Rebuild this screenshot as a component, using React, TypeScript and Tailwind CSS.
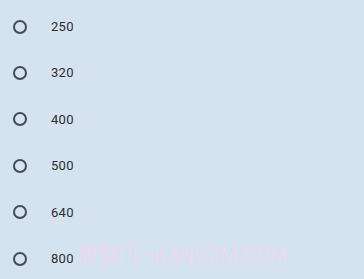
import React from "react";

const items = ["250", "320", "400", "500", "640", "800"];

export default function App() {
  return (
    <div
      className="relative w-[364px] h-[279px] overflow-hidden bg-[#d5e3f0] pt-[3.5px]"
      style={{ fontFamily: "Roboto, 'Noto Sans CJK SC', sans-serif" }}
    >
      {items.map((v) => (
        <div key={v} className="flex items-center h-[46.4px]">
          <div className="ml-[13px] w-[14px] h-[14px] rounded-full border-2 border-[#454b53]" />
          <span className="ml-[24px] text-[13px] text-[#2a2e33] tracking-[0.3px]">{v}</span>
        </div>
      ))}
      <div className="absolute left-[77px] top-[244px] text-[20px] leading-[22px] text-[#ecd9ee] whitespace-nowrap">
        康掌门 • KANGZM.COM
      </div>
    </div>
  );
}
